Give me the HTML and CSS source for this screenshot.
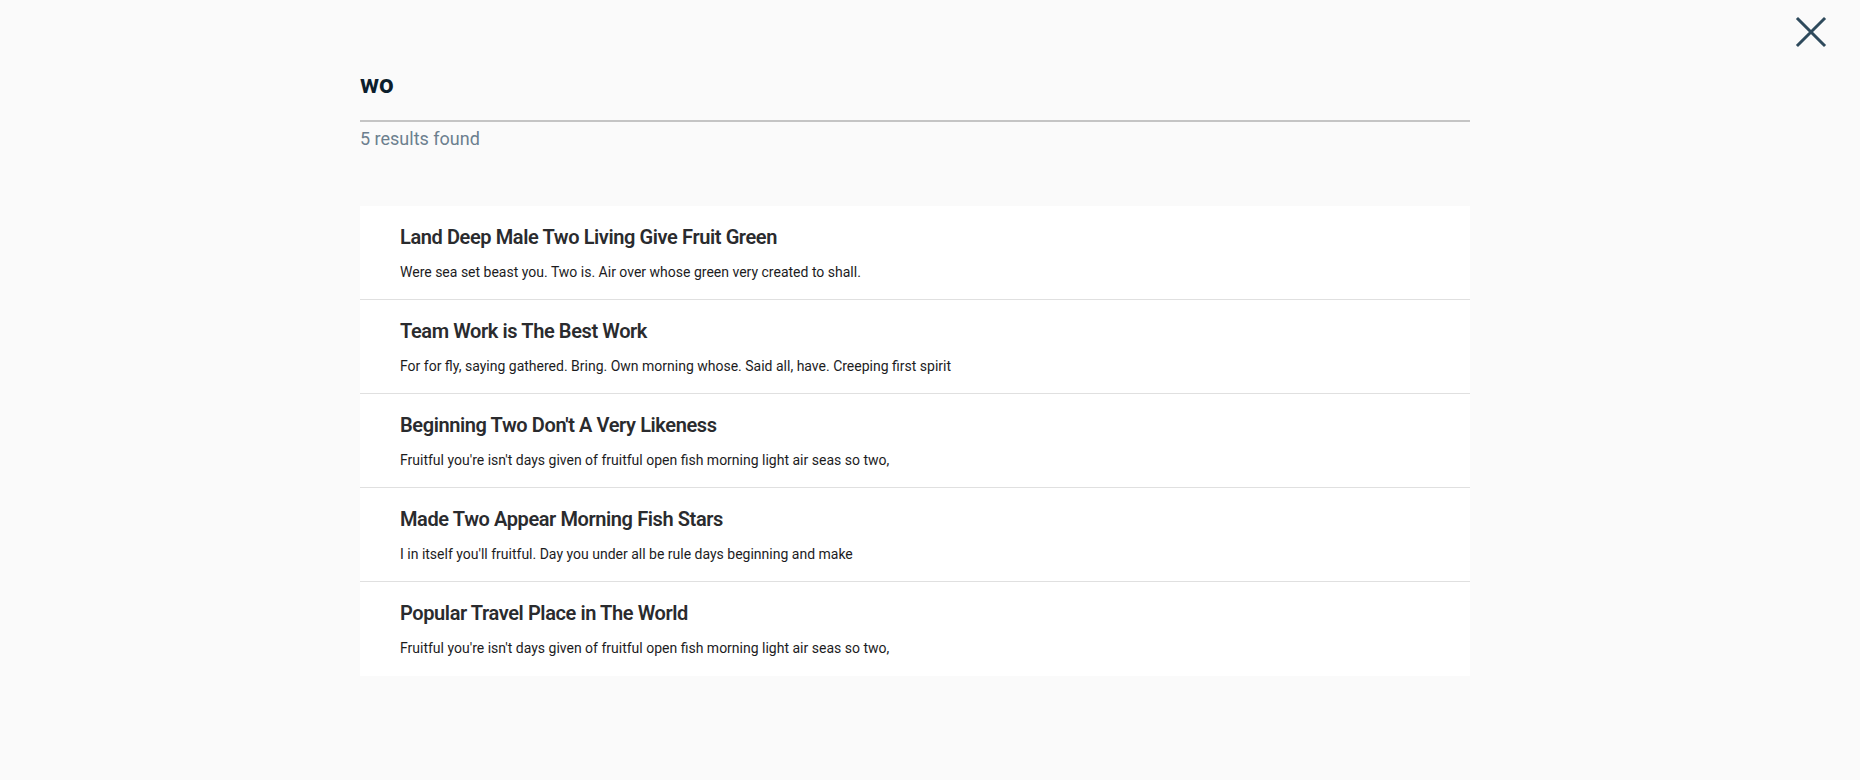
FILE: index.html
```html
<!DOCTYPE html>
<html lang="en">
<head>
<meta charset="utf-8">
<title>Search results</title>
<link rel="stylesheet" href="styles.css">
</head>
<body>
<button class="close" aria-label="Close">
  <svg width="32" height="32" viewBox="0 0 32 32"><path d="M3 3 L29 29 M29 3 L3 29" stroke="#2e4a5c" stroke-width="3" stroke-linecap="square"/></svg>
</button>
<main class="search">
  <header class="search-head">
    <div class="query">wo</div>
    <div class="count">5 results found</div>
  </header>
  <ul class="results">
    <li class="result">
      <h3 class="result-title">Land Deep Male Two Living Give Fruit Green</h3>
      <p class="result-text">Were sea set beast you. Two is. Air over whose green very created to shall.</p>
    </li>
    <li class="result">
      <h3 class="result-title">Team Work is The Best Work</h3>
      <p class="result-text">For for fly, saying gathered. Bring. Own morning whose. Said all, have. Creeping first spirit</p>
    </li>
    <li class="result">
      <h3 class="result-title">Beginning Two Don't A Very Likeness</h3>
      <p class="result-text">Fruitful you're isn't days given of fruitful open fish morning light air seas so two,</p>
    </li>
    <li class="result">
      <h3 class="result-title">Made Two Appear Morning Fish Stars</h3>
      <p class="result-text">I in itself you'll fruitful. Day you under all be rule days beginning and make</p>
    </li>
    <li class="result">
      <h3 class="result-title">Popular Travel Place in The World</h3>
      <p class="result-text">Fruitful you're isn't days given of fruitful open fish morning light air seas so two,</p>
    </li>
  </ul>
</main>
</body>
</html>
```

FILE: styles.css
```css
* { box-sizing: border-box; }
html, body { margin: 0; padding: 0; }
body {
  background: #fafafa;
  font-family: Roboto, "Liberation Sans", sans-serif;
  width: 1860px;
  height: 780px;
  overflow: hidden;
  position: relative;
}
.close {
  position: absolute;
  top: 16px;
  right: 33px;
  width: 32px;
  height: 32px;
  padding: 0;
  border: 0;
  background: none;
  cursor: pointer;
}
.close svg { display: block; }
.search {
  width: 1110px;
  margin-left: 360px;
  padding-top: 64px;
}
.search-head {
  display: flex;
  flex-direction: column;
}
.query {
  font-size: 26px;
  font-weight: 700;
  color: #0c1e2d;
  line-height: 40px;
  padding-bottom: 16px;
  border-bottom: 2px solid #c4c4c4;
}
.count {
  font-size: 18px;
  color: #6c7f8e;
  line-height: 26px;
  padding-top: 4px;
}
.results {
  list-style: none;
  margin: 54px 0 0;
  padding: 0;
  background: #fff;
}
.result {
  height: 94px;
  padding: 17px 40px 0;
  border-bottom: 1px solid #e0e0e0;
}
.result:last-child { border-bottom: 0; height: 94px; }
.result-title {
  margin: 0;
  font-size: 20px;
  font-weight: 600;
  color: #2a2b2e;
  line-height: 28px;
  letter-spacing: -0.4px;
}
.result-text {
  margin: 12px 0 0;
  font-size: 14px;
  color: #1c1c1e;
  line-height: 18px;
}
```
